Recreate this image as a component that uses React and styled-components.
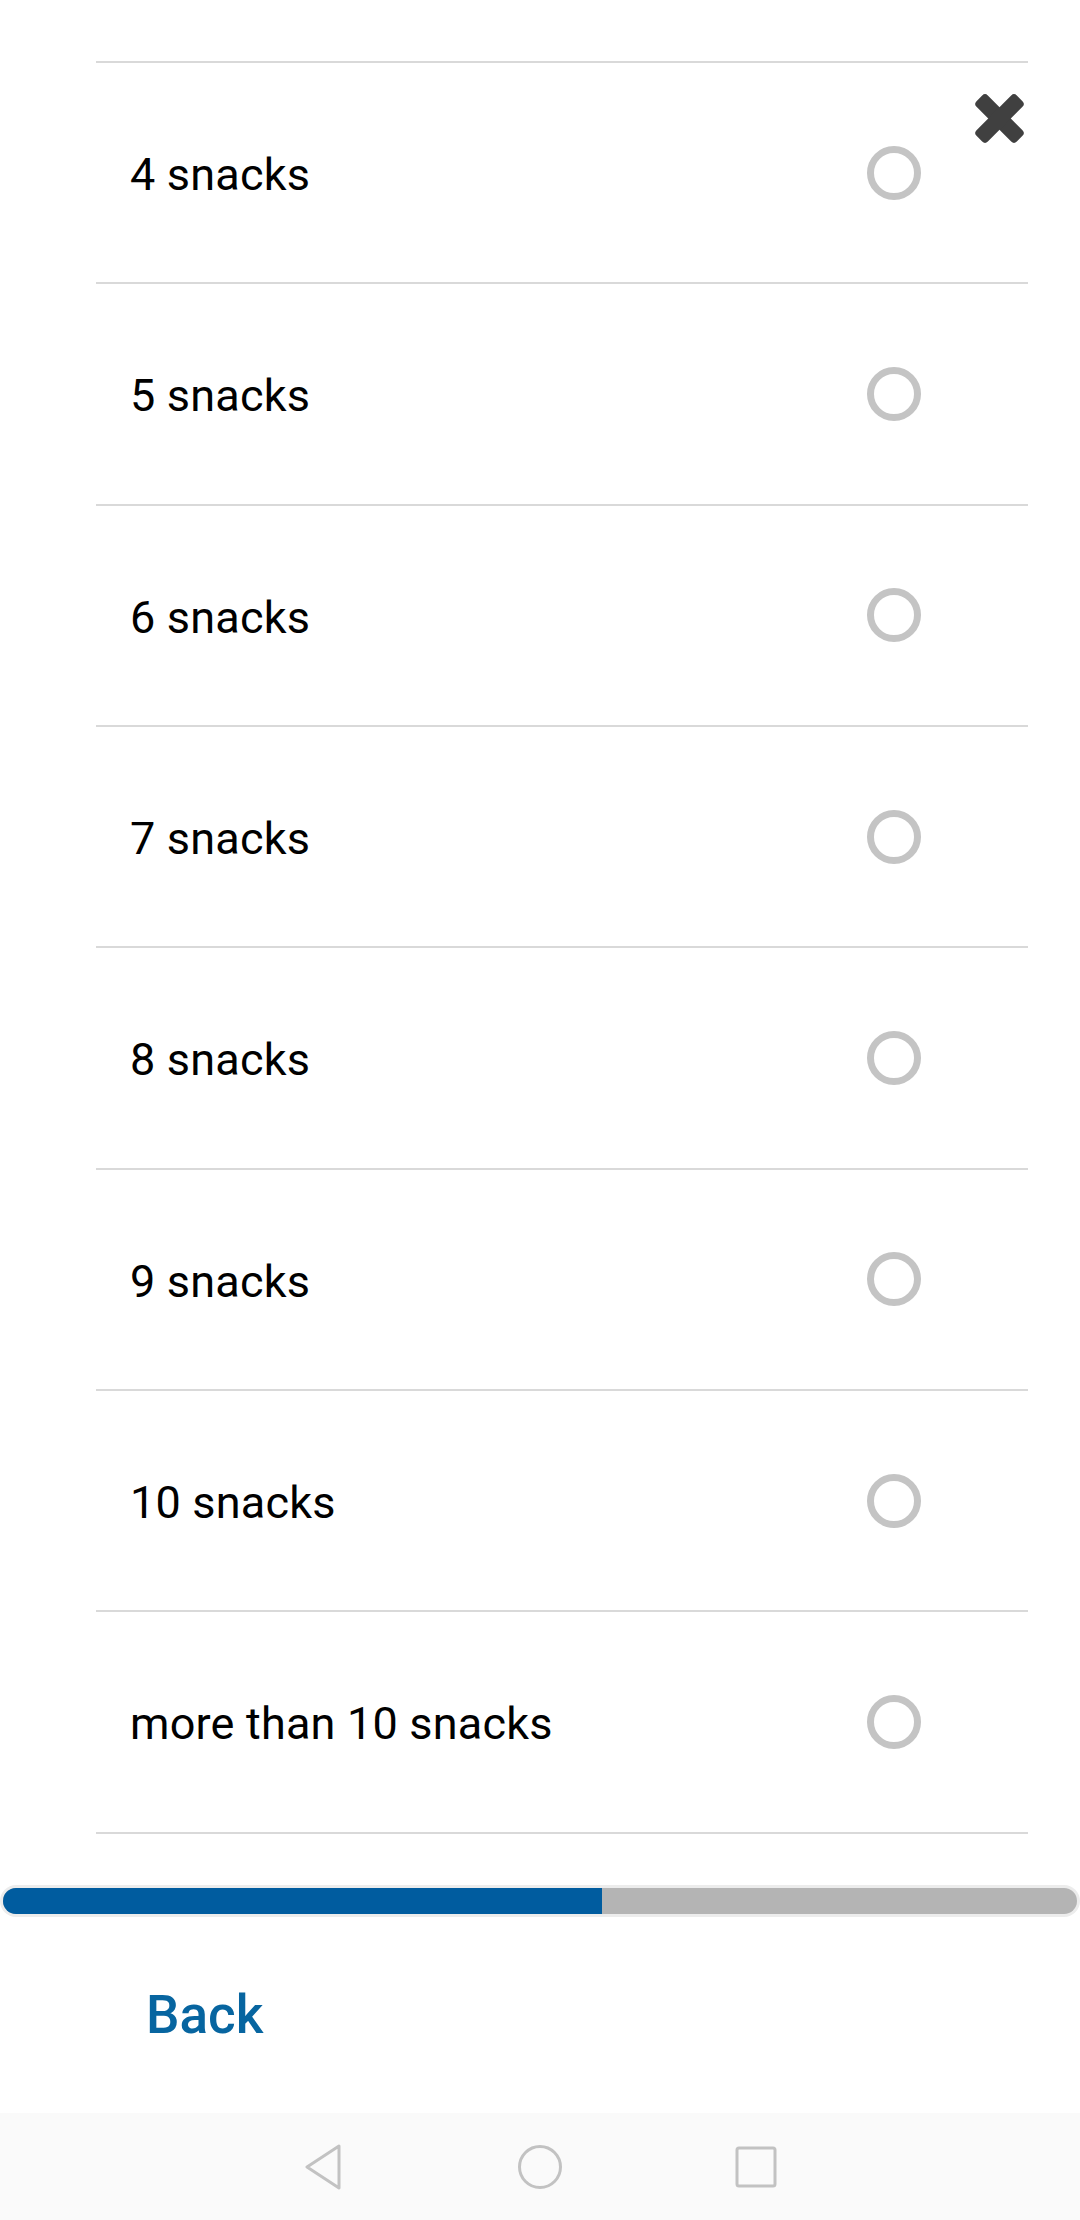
import React from "react";
import styled, { createGlobalStyle } from "styled-components";

const Global = createGlobalStyle`
  html, body { margin: 0; padding: 0; background: #ffffff; }
  body { font-family: Roboto, "Noto Sans", "Liberation Sans", sans-serif; }
  * { box-sizing: border-box; }
`;

const Page = styled.div`
  position: relative;
  width: 1080px;
  height: 2220px;
  display: flex;
  flex-direction: column;
  background: #ffffff;
  overflow: hidden;
`;

const List = styled.div`
  padding: 0 52px 0 96px;
  display: flex;
  flex-direction: column;
`;

const TopSpacer = styled.div`
  height: 63px;
  border-bottom: 2px solid #d9d9d9;
`;

const Row = styled.div`
  height: 221.33px;
  border-bottom: 2px solid #d9d9d9;
  display: flex;
  align-items: center;
  padding: 0 107px 0 34px;
`;

const Label = styled.span`
  flex: 1;
  font-size: 45px;
  color: #000000;
  letter-spacing: 0.2px;
  padding-top: 4px;
`;

const Radio = styled.span`
  width: 54px;
  height: 54px;
  border-radius: 50%;
  border: 7px solid #c4c4c4;
`;

const Close = styled.button`
  position: absolute;
  top: 93px;
  left: 974px;
  width: 51px;
  height: 51px;
  padding: 0;
  border: none;
  background: transparent;
  display: flex;
`;

const Track = styled.div`
  margin-top: 51px;
  padding: 3px;
  background: #ececec;
  border-radius: 16px;
`;

const TrackInner = styled.div`
  height: 26px;
  border-radius: 13px;
  background: #b4b4b4;
  overflow: hidden;
  display: flex;
`;

const Fill = styled.div`
  height: 100%;
  background: #005c9f;
`;

const Footer = styled.div`
  height: 196px;
  display: flex;
  align-items: center;
  padding-left: 146px;
`;

const BackLink = styled.span`
  font-size: 53px;
  font-weight: 500;
  color: #0765a0;
`;

const NavBar = styled.div`
  margin-top: auto;
  height: 107px;
  background: #fafafa;
  display: flex;
  align-items: center;
  justify-content: center;
`;

const NavSlot = styled.div`
  width: 216px;
  display: flex;
  justify-content: center;
  align-items: center;
`;

const options = [
  "4 snacks",
  "5 snacks",
  "6 snacks",
  "7 snacks",
  "8 snacks",
  "9 snacks",
  "10 snacks",
  "more than 10 snacks",
];

export default function App() {
  const progress = (598 / 1073) * 100;
  return (
    <Page>
      <Global />
      <List>
        <TopSpacer />
        {options.map((o) => (
          <Row key={o}>
            <Label>{o}</Label>
            <Radio />
          </Row>
        ))}
      </List>
      <Close aria-label="close">
        <svg width="51" height="51" viewBox="0 0 51 51">
          <g fill="#404040" transform="rotate(45 25.5 25.5)">
            <rect x="-3" y="17.5" width="57" height="16" rx="4" />
            <rect x="17.5" y="-3" width="16" height="57" rx="4" />
          </g>
        </svg>
      </Close>
      <Track>
        <TrackInner>
          <Fill style={{ width: `${progress}%` }} />
        </TrackInner>
      </Track>
      <Footer>
        <BackLink>Back</BackLink>
      </Footer>
      <NavBar>
        <NavSlot>
          <svg width="44" height="46" viewBox="0 0 44 46">
            <path d="M37 2 L5 23 L37 44 Z" fill="none" stroke="#c2c2c2" strokeWidth="3" strokeLinejoin="round" />
          </svg>
        </NavSlot>
        <NavSlot>
          <svg width="46" height="46" viewBox="0 0 46 46">
            <circle cx="23" cy="23" r="20.5" fill="none" stroke="#c2c2c2" strokeWidth="3" />
          </svg>
        </NavSlot>
        <NavSlot>
          <svg width="42" height="42" viewBox="0 0 42 42">
            <rect x="2" y="2" width="38" height="38" rx="2" fill="none" stroke="#c2c2c2" strokeWidth="3" />
          </svg>
        </NavSlot>
      </NavBar>
    </Page>
  );
}
